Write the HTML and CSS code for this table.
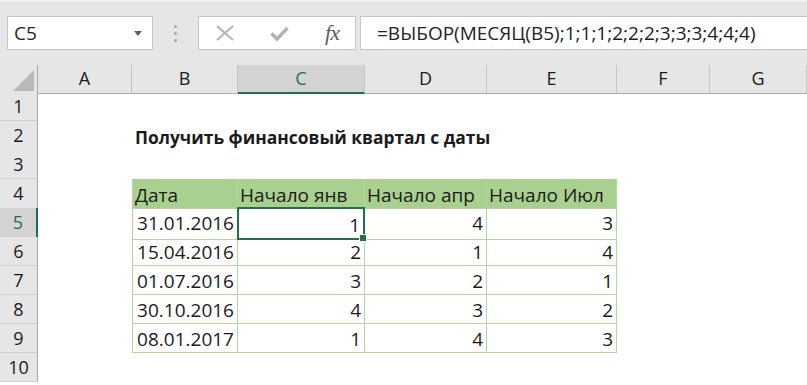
FILE: index.html
```html
<!DOCTYPE html>
<html lang="ru">
<head>
<meta charset="UTF-8" />
<title>Финансовый квартал</title>
<link rel="stylesheet" href="styles.css">
</head>
<body>

<!-- Name box + formula bar -->
<div class="toolbar">
  <div class="namebox">
    <span>C5</span>
    <svg class="drop" width="8" height="5" viewBox="0 0 8 5"><path d="M0 0h8L4 5z" fill="#606060"/></svg>
  </div>
  <div class="grip"><i></i><i></i><i></i></div>
  <div class="fxbtns">
    <svg width="18" height="16" viewBox="0 0 18 16"><path d="M1 1l16 14M17 1L1 15" stroke="#b3b3b3" stroke-width="2" fill="none"/></svg>
    <svg width="19" height="15" viewBox="0 0 19 15"><path d="M1.5 7.5l5.5 5.5L17.5 2" stroke="#b3b3b3" stroke-width="3.5" fill="none"/></svg>
    <span class="fx">fx</span>
  </div>
  <div class="formula">=ВЫБОР(МЕСЯЦ(B5);1;1;1;2;2;2;3;3;3;4;4;4)</div>
</div>

<!-- Worksheet -->
<div class="sheet">
  <div class="row head">
    <div class="corner"><svg width="21" height="21" viewBox="0 0 21 21"><path d="M21 0V21H0z" fill="#b9b9b9"/></svg></div>
    <div class="ch">A</div>
    <div class="ch">B</div>
    <div class="ch sel">C</div>
    <div class="ch">D</div>
    <div class="ch">E</div>
    <div class="ch">F</div>
    <div class="ch">G</div>
  </div>

  <div class="row"><div class="rh">1</div><div></div><div></div><div></div><div></div><div></div><div></div><div></div></div>
  <div class="row"><div class="rh">2</div><div></div><div class="title">Получить финансовый квартал с даты</div><div></div><div></div><div></div><div></div><div></div></div>
  <div class="row"><div class="rh">3</div><div></div><div></div><div></div><div></div><div></div><div></div><div></div></div>

  <div class="row">
    <div class="rh">4</div><div></div>
    <div class="cell th first">Дата</div>
    <div class="cell th">Начало янв</div>
    <div class="cell th">Начало апр</div>
    <div class="cell th">Начало Июл</div>
    <div></div><div></div>
  </div>
  <div class="row">
    <div class="rh sel">5</div><div></div>
    <div class="cell num first">31.01.2016</div>
    <div class="cell num active">1</div>
    <div class="cell num">4</div>
    <div class="cell num">3</div>
    <div></div><div></div>
  </div>
  <div class="row">
    <div class="rh">6</div><div></div>
    <div class="cell num first">15.04.2016</div>
    <div class="cell num">2</div>
    <div class="cell num">1</div>
    <div class="cell num">4</div>
    <div></div><div></div>
  </div>
  <div class="row">
    <div class="rh">7</div><div></div>
    <div class="cell num first">01.07.2016</div>
    <div class="cell num">3</div>
    <div class="cell num">2</div>
    <div class="cell num">1</div>
    <div></div><div></div>
  </div>
  <div class="row">
    <div class="rh">8</div><div></div>
    <div class="cell num first">30.10.2016</div>
    <div class="cell num">4</div>
    <div class="cell num">3</div>
    <div class="cell num">2</div>
    <div></div><div></div>
  </div>
  <div class="row">
    <div class="rh">9</div><div></div>
    <div class="cell num first">08.01.2017</div>
    <div class="cell num">1</div>
    <div class="cell num">4</div>
    <div class="cell num">3</div>
    <div></div><div></div>
  </div>
  <div class="row"><div class="rh">10</div><div></div><div></div><div></div><div></div><div></div><div></div><div></div></div>
</div>

</body>
</html>
```

FILE: styles.css
```css
* { box-sizing: border-box; }
body {
  margin: 0;
  width: 807px;
  height: 385px;
  overflow: hidden;
  background: #fff;
  font-family: "Open Sans", sans-serif;
  color: #1b1b1b;
}

/* Formula bar */
.toolbar {
  height: 65px;
  background: #e6e6e6;
  border-top: 2px solid #f0f0f0;
  padding-top: 14px;
  display: flex;
  align-items: flex-start;
}
.namebox, .fxbtns, .formula {
  height: 34px;
  background: #fff;
  border: 1px solid #c6c6c6;
  display: flex;
  align-items: center;
}
.namebox {
  margin-left: 7px;
  width: 146px;
  padding: 0 10px 0 6px;
  justify-content: space-between;
  font-size: 19px;
  color: #262626;
}
.grip {
  width: 45px;
  height: 34px;
  display: flex;
  flex-direction: column;
  align-items: center;
  justify-content: center;
  gap: 4px;
}
.grip i {
  width: 3px;
  height: 3px;
  border-radius: 50%;
  background: #a8a8a8;
}
.fxbtns {
  width: 158px;
  padding: 0 16px 0 17px;
  justify-content: space-between;
}
.fx {
  font-family: "Liberation Serif", serif;
  font-style: italic;
  font-size: 22px;
  color: #5c5c5c;
  letter-spacing: -1px;
}
.formula {
  margin-left: 4px;
  flex: 1;
  margin-right: -4px;
  padding-left: 16px;
  font-size: 19px;
  color: #222;
  white-space: nowrap;
}

/* Grid */
.row {
  display: grid;
  grid-template-columns: 38px 94px 106px 127px 122px 130px 93px 1fr;
  height: 29px;
}
.row.head { height: 27px; }
.corner {
  background: #e6e6e6;
  border-right: 1px solid #ababab;
  border-bottom: 1px solid #ababab;
  display: flex;
  align-items: flex-end;
  justify-content: flex-end;
  padding: 0 3px 2px 0;
}
.ch {
  background: #e6e6e6;
  border-right: 1px solid #c6c6c6;
  border-bottom: 1px solid #ababab;
  text-align: center;
  font-size: 18px;
  line-height: 27px;
}
.ch.sel {
  background: #d3d3d3;
  color: #217346;
  border-bottom: 2px solid #217346;
}
.rh {
  background: #e6e6e6;
  border-right: 1px solid #ababab;
  border-bottom: 1px solid #d0d0d0;
  text-align: center;
  font-size: 18px;
  line-height: 28px;
}
.rh.sel {
  background: #d3d3d3;
  color: #217346;
  border-right: 2px solid #217346;
}

.title {
  white-space: nowrap;
  font-weight: bold;
  font-size: 17.4px;
  line-height: 29px;
  padding: 2px 0 0 3px;
}

/* Table cells */
.cell {
  font-size: 19px;
  line-height: 26px;
  padding: 2px 3px 0;
  white-space: nowrap;
  border-right: 1px solid #b5d6a0;
  border-bottom: 1px solid #b5d6a0;
}
.cell.first { border-left: 1px solid #b5d6a0; }
.th {
  background: #a9d08e;
  border-top: 1px solid #a9d08e;
  padding-left: 2px;
}
.num { text-align: right; }
.active {
  position: relative;
  border: 2px solid #217346;
  margin: -1px 0 0 -1px;
  padding-top: 3px;
}
.active::after {
  content: "";
  position: absolute;
  right: -4px;
  bottom: -4px;
  width: 6px;
  height: 6px;
  background: #217346;
  border: 1px solid #fff;
}
```
